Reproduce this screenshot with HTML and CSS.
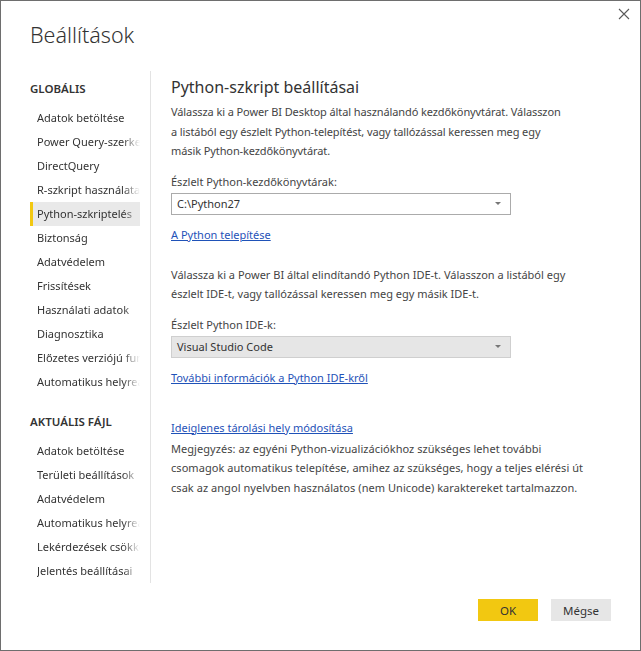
FILE: index.html
```html
<!DOCTYPE html>
<html lang="hu">
<head>
<meta charset="utf-8">
<title>Beállítások</title>
<link rel="stylesheet" href="styles.css">
</head>
<body>
<div class="dialog">
  <button class="close" aria-label="Bezárás">
    <svg width="12" height="12" viewBox="0 0 12 12"><path d="M1 1 L11 11 M11 1 L1 11" stroke="#5a5a5a" stroke-width="1.1" fill="none"/></svg>
  </button>
  <h1 class="title">Beállítások</h1>
  <div class="main">
    <nav class="sidebar">
      <div class="group-title">GLOBÁLIS</div>
      <ul class="nav-list">
        <li class="nav-item"><span class="nav-text">Adatok betöltése</span></li>
        <li class="nav-item"><span class="nav-text">Power Query-szerkesztő</span></li>
        <li class="nav-item"><span class="nav-text">DirectQuery</span></li>
        <li class="nav-item"><span class="nav-text">R-szkript használata</span></li>
        <li class="nav-item selected"><span class="nav-text">Python-szkriptelés</span></li>
        <li class="nav-item"><span class="nav-text">Biztonság</span></li>
        <li class="nav-item"><span class="nav-text">Adatvédelem</span></li>
        <li class="nav-item"><span class="nav-text">Frissítések</span></li>
        <li class="nav-item"><span class="nav-text">Használati adatok</span></li>
        <li class="nav-item"><span class="nav-text">Diagnosztika</span></li>
        <li class="nav-item"><span class="nav-text">Előzetes verziójú funkciók</span></li>
        <li class="nav-item"><span class="nav-text">Automatikus helyreállítás</span></li>
      </ul>
      <div class="group-title group-second">AKTUÁLIS FÁJL</div>
      <ul class="nav-list">
        <li class="nav-item"><span class="nav-text">Adatok betöltése</span></li>
        <li class="nav-item"><span class="nav-text">Területi beállítások</span></li>
        <li class="nav-item"><span class="nav-text">Adatvédelem</span></li>
        <li class="nav-item"><span class="nav-text">Automatikus helyreállítás</span></li>
        <li class="nav-item"><span class="nav-text">Lekérdezések csökkentése</span></li>
        <li class="nav-item"><span class="nav-text">Jelentés beállításai</span></li>
      </ul>
    </nav>
    <section class="content">
      <h2 class="heading">Python-szkript beállításai</h2>
      <p class="para para-first">Válassza ki a Power BI Desktop által használandó kezdőkönyvtárat. Válasszon<br>a listából egy észlelt Python-telepítést, vagy tallózással keressen meg egy<br>másik Python-kezdőkönyvtárat.</p>
      <div class="label">Észlelt Python-kezdőkönyvtárak:</div>
      <div class="select">
        <span class="select-text">C:\Python27</span>
        <span class="caret"></span>
      </div>
      <a class="link" href="#">A Python telepítése</a>
      <p class="para para-second">Válassza ki a Power BI által elindítandó Python IDE-t. Válasszon a listából egy<br>észlelt IDE-t, vagy tallózással keressen meg egy másik IDE-t.</p>
      <div class="label">Észlelt Python IDE-k:</div>
      <div class="select select-gray">
        <span class="select-text">Visual Studio Code</span>
        <span class="caret"></span>
      </div>
      <a class="link" href="#">További információk a Python IDE-kről</a>
      <a class="link link-temp" href="#">Ideiglenes tárolási hely módosítása</a>
      <p class="para para-note">Megjegyzés: az egyéni Python-vizualizációkhoz szükséges lehet további<br>csomagok automatikus telepítése, amihez az szükséges, hogy a teljes elérési út<br>csak az angol nyelvben használatos (nem Unicode) karaktereket tartalmazzon.</p>
    </section>
  </div>
  <div class="footer">
    <button class="btn btn-ok">OK</button>
    <button class="btn btn-cancel">Mégse</button>
  </div>
</div>
</body>
</html>
```
FILE: styles.css
```css
* { box-sizing: border-box; }
html, body { margin: 0; padding: 0; background: #fff; }
body { font-family: "Noto Sans", "Open Sans", sans-serif; color: #333; }

.dialog {
  position: relative;
  width: 641px;
  height: 651px;
  border: 1px solid #6e6e6e;
  background: #fff;
  display: flex;
  flex-direction: column;
  padding-left: 29px;
}

.close {
  position: absolute;
  top: 7px;
  right: 10px;
  width: 12px;
  height: 12px;
  padding: 0;
  border: 0;
  background: none;
  display: flex;
}

.title {
  margin: 18px 0 0 0;
  height: 32px;
  font-size: 21.5px;
  line-height: 32px;
  font-weight: 300;
  color: #333;
}

.main {
  display: flex;
  margin-top: 20px;
  height: 512px;
}

.sidebar {
  width: 121px;
  border-right: 1px solid #e3e3e3;
  padding-top: 8px;
  flex-shrink: 0;
}

.group-title {
  font-size: 11.5px;
  font-weight: 600;
  line-height: 20px;
  height: 20px;
  color: #333;
  margin-bottom: 7px;
}
.group-second { margin-top: 18px; }

.nav-list {
  list-style: none;
  margin: 0;
  padding: 0;
}

.nav-item {
  width: 110px;
  height: 24px;
  line-height: 24px;
  font-size: 11px;
  color: #333;
  padding-left: 4px;
  border-left: 3px solid transparent;
  display: flex;
}
.nav-item.selected {
  background: #e9e9e9;
  border-left-color: #f2c811;
}
.nav-text {
  display: block;
  white-space: nowrap;
  overflow: hidden;
  width: 103px;
  -webkit-mask-image: linear-gradient(to right, #000 86px, transparent 103px);
  mask-image: linear-gradient(to right, #000 86px, transparent 103px);
}

.content {
  flex: 1;
  padding-left: 20px;
  padding-top: 4px;
  display: flex;
  flex-direction: column;
  align-items: flex-start;
}

.heading {
  margin: 0;
  font-size: 16px;
  font-weight: 400;
  line-height: 24px;
  color: #333;
}

.para {
  margin: 3px 0 0 0;
  font-size: 11px;
  line-height: 19.5px;
  color: #444;
  white-space: nowrap;
}
.para-first { letter-spacing: -0.1px; }
.para-second { margin-top: 20px; }
.para-note { margin-top: 1px; letter-spacing: 0.05px; }

.label {
  margin-top: 11px;
  font-size: 11px;
  line-height: 20px;
  color: #444;
}

.select {
  margin-top: 1px;
  width: 340px;
  height: 22px;
  border: 1px solid #ababab;
  background: #fff;
  display: flex;
  align-items: center;
  justify-content: space-between;
  padding: 0 9px 0 5px;
  font-size: 11px;
  color: #333;
}
.select-gray {
  background: #e6e6e6;
  border-color: #cfcfcf;
}
.caret {
  width: 0;
  height: 0;
  border-left: 3px solid transparent;
  border-right: 3px solid transparent;
  border-top: 3px solid #777;
}

.link {
  margin-top: 10px;
  font-size: 11px;
  line-height: 20px;
  color: #1f52b8;
  text-decoration: underline;
}
.link-temp { margin-top: 30px; }

.footer {
  display: flex;
  justify-content: flex-end;
  gap: 13px;
  margin-top: 16px;
  padding-right: 29px;
}
.btn {
  width: 60px;
  height: 22px;
  border: 0;
  padding: 0;
  font-family: "Noto Sans", "Open Sans", sans-serif;
  font-size: 11.5px;
  color: #333;
}
.btn-ok { background: #f2c811; }
.btn-cancel { background: #e6e6e6; }
```
